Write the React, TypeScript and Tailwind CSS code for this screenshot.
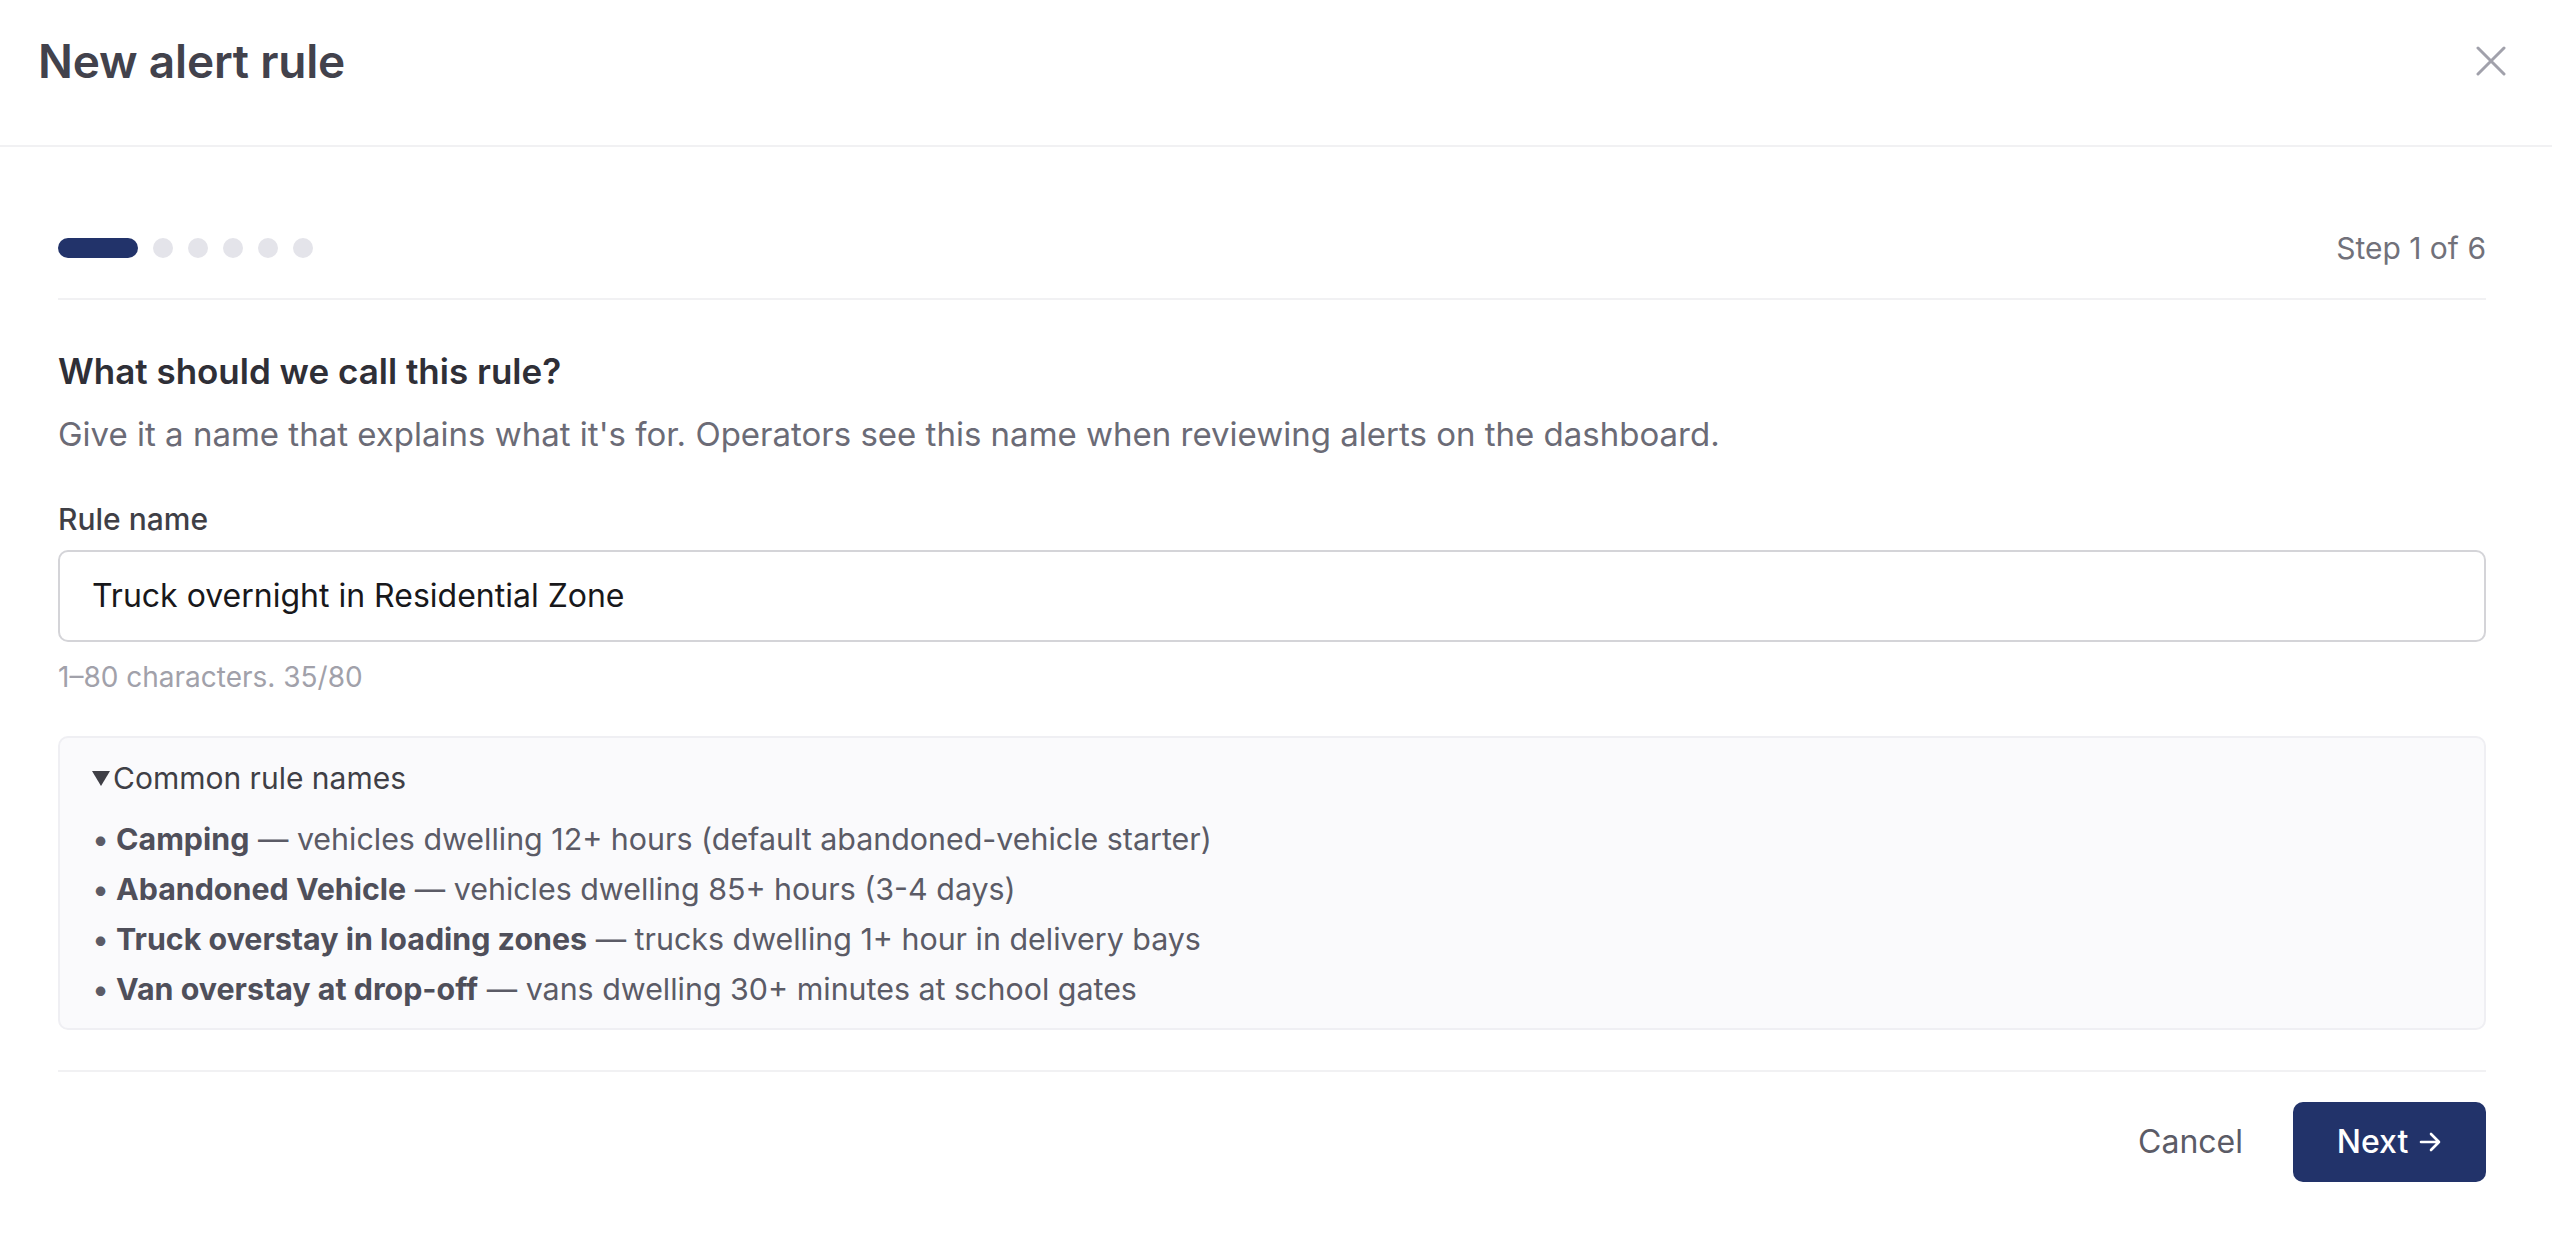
import { FC } from "react";

type RuleHint = {
  name: string;
  detail: string;
};

const hints: RuleHint[] = [
  { name: "Camping", detail: "vehicles dwelling 12+ hours (default abandoned-vehicle starter)" },
  { name: "Abandoned Vehicle", detail: "vehicles dwelling 85+ hours (3-4 days)" },
  { name: "Truck overstay in loading zones", detail: "trucks dwelling 1+ hour in delivery bays" },
  { name: "Van overstay at drop-off", detail: "vans dwelling 30+ minutes at school gates" },
];

const StepDots: FC<{ current: number; total: number }> = ({ current, total }) => (
  <div className="flex items-center gap-[15px]">
    {Array.from({ length: total }).map((_, i) =>
      i + 1 === current ? (
        <span key={i} className="h-[20px] w-[80px] rounded-full bg-[#22336a]" />
      ) : (
        <span key={i} className="h-[20px] w-[20px] rounded-full bg-[#e4e4ea]" />
      )
    )}
  </div>
);

const App: FC = () => {
  const value = "Truck overnight in Residential Zone";

  return (
    <div className="min-h-screen w-full bg-white font-['Inter',sans-serif] text-[#3f3f46]">
      <div className="flex h-[147px] items-center justify-between border-b-2 border-[#f1f1f3] pb-[23px] pl-[38px] pr-[46px]">
        <h1 className="text-[46px] font-semibold tracking-[-0.2px] text-[#42424c]">New alert rule</h1>
        <button className="flex h-[30px] w-[30px] items-center justify-center text-[#a1a1ab]">
          <svg width="30" height="30" viewBox="0 0 30 30" fill="none" stroke="currentColor" strokeWidth="3" strokeLinecap="round">
            <path d="M2 2L28 28M28 2L2 28" />
          </svg>
        </button>
      </div>

      <div className="pl-[58px] pr-[66px]">
        <div className="flex items-center justify-between border-b-2 border-[#f1f1f3] pb-[40px] pt-[91px]">
          <StepDots current={1} total={6} />
          <span className="text-[30px] leading-[20px] text-[#71717a]">Step 1 of 6</span>
        </div>

        <h2 className="mt-[49px] text-[35px] font-semibold leading-[44px] text-[#2f2f37]">What should we call this rule?</h2>
        <p className="mt-[19px] text-[33px] leading-[44px] text-[#6b6b76]">
          Give it a name that explains what it's for. Operators see this name when reviewing alerts on the dashboard.
        </p>

        <label className="mt-[43px] block text-[30px] font-medium leading-[40px] text-[#3f3f46]">Rule name</label>
        <div className="mt-[11px] flex h-[92px] items-center rounded-[10px] border-2 border-[#d4d4d8] px-[32px]">
          <span className="text-[32px] text-[#18181b]">{value}</span>
        </div>
        <p className="mt-[18px] text-[28px] leading-[34px] text-[#a1a1aa]">1–80 characters. {value.length}/80</p>

        <div className="mt-[42px] rounded-[10px] border-2 border-[#efeff3] bg-[#fafafc] px-[32px] pb-[14px] pt-[20px]">
          <div className="flex items-center text-[30px] leading-[40px] text-[#3f3f46]">
            <svg width="18" height="16" viewBox="0 0 18 16" className="mr-[3px] fill-[#3f3f46]">
              <path d="M0 1H18L9 16Z" />
            </svg>
            Common rule names
          </div>
          <ul className="mt-[16px] flex flex-col">
            {hints.map((h) => (
              <li key={h.name} className="flex items-baseline text-[30.4px] leading-[50px] text-[#5b5b66]">
                <span className="w-[24px] shrink-0">•</span>
                <span>
                  <strong className="font-bold text-[#4f4f5a]">{h.name}</strong> — {h.detail}
                </span>
              </li>
            ))}
          </ul>
        </div>

        <div className="mt-[40px] flex items-center justify-end gap-[50px] border-t-2 border-[#f1f1f3] pt-[30px]">
          <button className="text-[32px] text-[#5b5b66]">Cancel</button>
          <button className="flex h-[80px] w-[193px] items-center justify-center gap-[10px] rounded-[10px] bg-[#22336a] text-[32px] font-medium text-white">
            Next
            <svg width="24" height="24" viewBox="0 0 24 24" fill="none" stroke="currentColor" strokeWidth="2.6" strokeLinecap="round" strokeLinejoin="round">
              <path d="M3 12H21M13 4L21 12L13 20" />
            </svg>
          </button>
        </div>
      </div>
    </div>
  );
};

export default App;
